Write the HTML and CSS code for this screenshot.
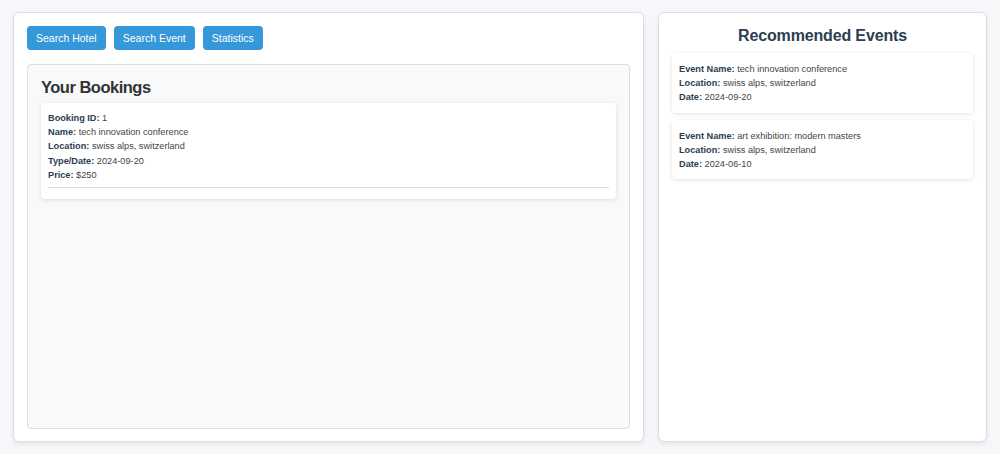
FILE: index.html
```html
<!DOCTYPE html>
<html lang="en">
<head>
  <meta charset="UTF-8">
  <meta name="viewport" content="width=device-width, initial-scale=1.0">
  <title>Bookings</title>
  <link rel="stylesheet" href="styles.css">
</head>
<body>
  <div class="main">
    <div class="left_panel">
      <div class="nav">
        <button class="nav_btn">Search Hotel</button>
        <button class="nav_btn">Search Event</button>
        <button class="nav_btn">Statistics</button>
      </div>

      <div class="bookings">
        <h2>Your Bookings</h2>
        <div class="booking_card">
          <p><b>Booking ID:</b> 1</p>
          <p><b>Name:</b> tech innovation conference</p>
          <p><b>Location:</b> swiss alps, switzerland</p>
          <p><b>Type/Date:</b> 2024-09-20</p>
          <p><b>Price:</b> $250</p>
          <hr>
        </div>
      </div>
    </div>

    <div class="right_panel">
      <h2>Recommended Events</h2>
      <div class="event_card">
        <p><b>Event Name:</b> tech innovation conference</p>
        <p><b>Location:</b> swiss alps, switzerland</p>
        <p><b>Date:</b> 2024-09-20</p>
      </div>
      <div class="event_card">
        <p><b>Event Name:</b> art exhibition: modern masters</p>
        <p><b>Location:</b> swiss alps, switzerland</p>
        <p><b>Date:</b> 2024-06-10</p>
      </div>
    </div>
  </div>
</body>
</html>
```

FILE: styles.css
```css
*{
  margin: 0;
  padding: 0;
  box-sizing: border-box;
}
body {
  background-color: #f5f7fa;
  font-family: "Liberation Sans", Arial, sans-serif;
  color: #333;
  padding: 12px 13px;
}
.main {
  display: flex;
  gap: 14px;
  height: 430px;
}
.left_panel {
  width: 631px;
  display: flex;
  flex-direction: column;
  padding: 13px 13px 12px 13px;
  background-color: #fff;
  border: 1px solid #ddd;
  border-radius: 6px;
  box-shadow: 0 2px 4px rgba(0, 0, 0, .08);
}
.nav {
  display: flex;
  gap: 8px;
  margin-bottom: 14px;
}
.nav_btn {
  height: 24px;
  padding: 0 9px;
  font-family: inherit;
  font-size: 10.5px;
  color: #fff;
  background-color: #3498db;
  border: none;
  border-radius: 4px;
  cursor: pointer;
}
.bookings {
  flex: 1;
  padding: 12px 13px;
  background-color: #f8f9fa;
  border: 1px solid #ddd;
  border-radius: 4px;
}
.bookings h2 {
  font-size: 16.5px;
  letter-spacing: -0.5px;
  line-height: 20px;
  margin-bottom: 6px;
  color: #333;
}
.booking_card {
  padding: 8px 7px 11px;
  background-color: #fff;
  border-radius: 4px;
  box-shadow: 0 1px 4px rgba(0, 0, 0, .12);
}
.booking_card p,
.event_card p {
  font-size: 9.2px;
  line-height: 14.2px;
  color: #444;
}
.booking_card b,
.event_card b {
  color: #2c3e50;
}
.booking_card hr {
  margin-top: 5px;
  border: none;
  border-top: 1px solid #ddd;
}
.right_panel {
  width: 329px;
  padding: 13px 13px;
  background-color: #fff;
  border: 1px solid #ddd;
  border-radius: 6px;
  box-shadow: 0 2px 4px rgba(0, 0, 0, .08);
}
.right_panel h2 {
  font-size: 16px;
  letter-spacing: -0.15px;
  line-height: 20px;
  text-align: center;
  color: #2c3e50;
  margin-bottom: 7px;
}
.event_card {
  padding: 9px 7px 8px;
  margin-bottom: 7px;
  background-color: #fff;
  border-radius: 4px;
  box-shadow: 0 1px 4px rgba(0, 0, 0, .12);
}
```
